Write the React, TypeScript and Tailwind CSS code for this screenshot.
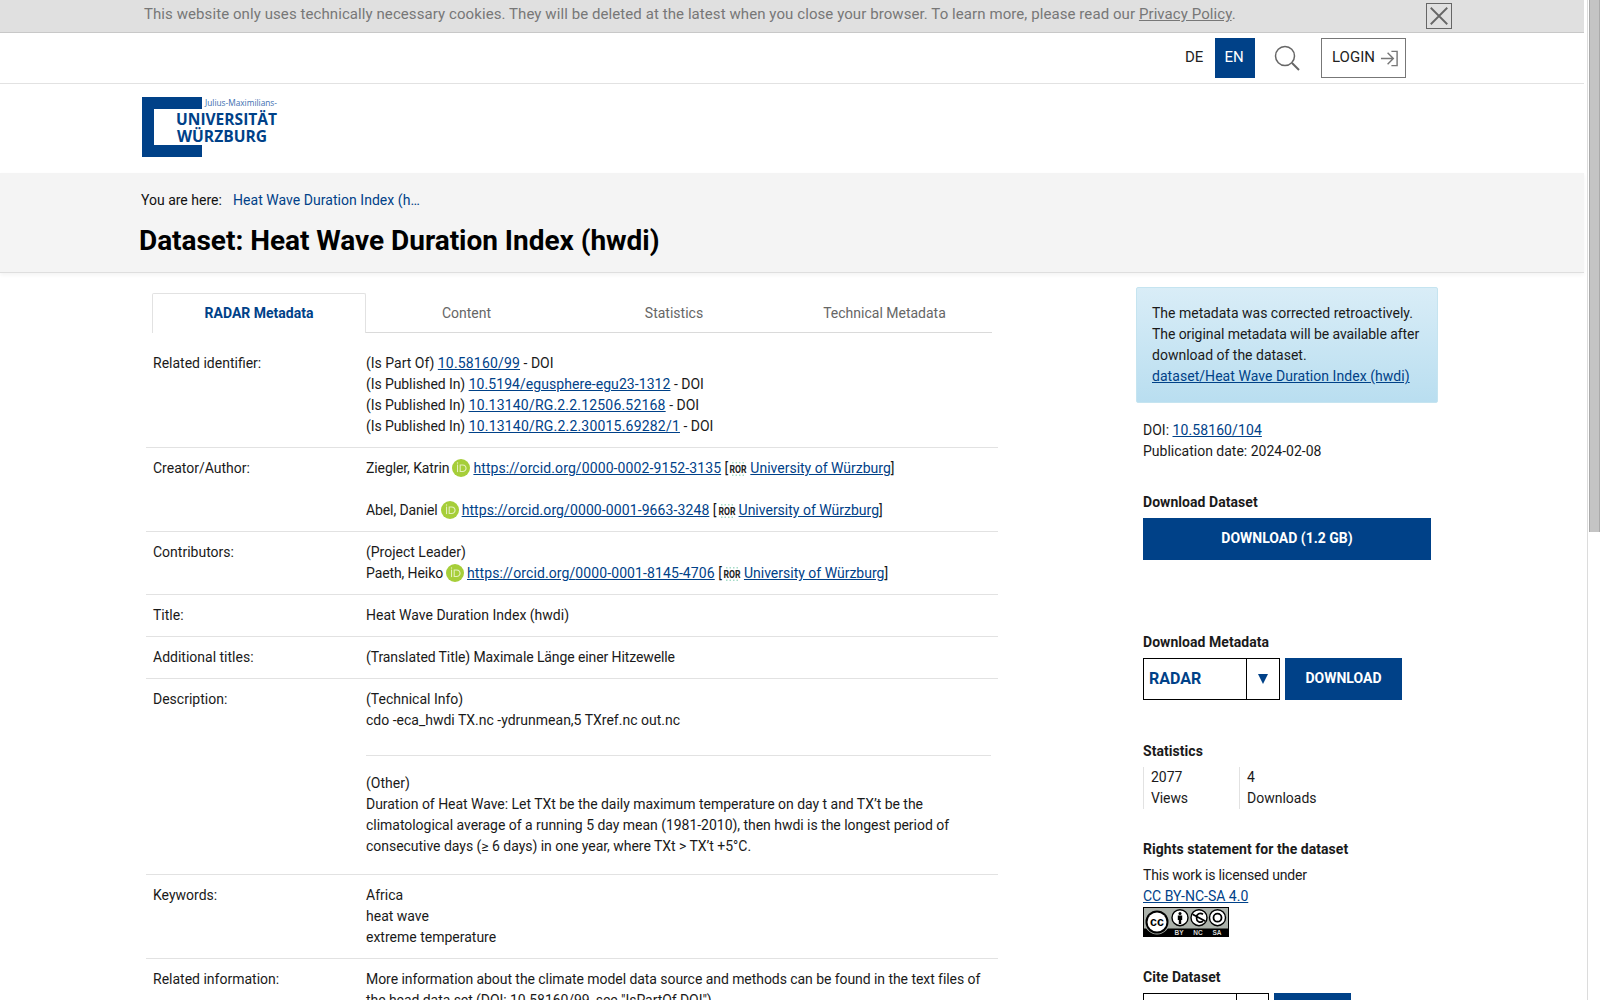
import { ReactNode } from "react"

const linkCls = "text-[#004188] underline"

function Orcid() {
  return (
    <svg viewBox="0 0 256 256" className="mx-[3px] inline-block h-[18px] w-[18px] align-[-4px]">
      <circle cx="128" cy="128" r="128" fill="#a6ce39" />
      <g fill="#e4f0bd">
        <path d="M86.3 186.2H70.9V79.1h15.4v107.1z" />
        <path d="M108.9 79.1h41.6c39.6 0 57 28.3 57 53.6 0 27.5-21.5 53.6-56.8 53.6h-41.8V79.1zm15.4 93.3h24.5c34.9 0 42.9-26.5 42.9-39.7C191.7 111.2 178 93 148 93h-23.7v79.4z" />
        <path d="M88.7 56.8c0 5.5-4.5 10.1-10.1 10.1s-10.1-4.6-10.1-10.1c0-5.6 4.5-10.1 10.1-10.1s10.1 4.6 10.1 10.1z" />
      </g>
    </svg>
  )
}

function Ror() {
  return (
    <svg viewBox="0 0 20 14" className="mr-[2px] inline-block h-[14px] w-[20px] align-[-3px]">
      <g fill="#a5dcc8">
        <rect x="4" y="0" width="1.5" height="1.5" />
        <rect x="7.500" y="0" width="1.5" height="1.5" />
        <rect x="11" y="0" width="1.5" height="1.5" />
        <rect x="14.500" y="0" width="1.5" height="1.5" />
        <rect x="4" y="12.500" width="1.5" height="1.5" />
        <rect x="7.500" y="12.500" width="1.5" height="1.5" />
        <rect x="11" y="12.500" width="1.5" height="1.5" />
        <rect x="14.500" y="12.500" width="1.5" height="1.5" />
      </g>
      <text x="10" y="10.5" textAnchor="middle" fontFamily="Roboto, sans-serif" fontWeight="700" fontSize="10" fill="#222" textLength="17" lengthAdjust="spacingAndGlyphs">
        ROR
      </text>
    </svg>
  )
}

function Person({ name, id }: { name: string; id: string }) {
  return (
    <>
      <span className="tracking-[-0.1px]">{name}</span>
      <Orcid />
      <a className={`${linkCls} tracking-[0.1px]`}>https://orcid.org/{id}</a> [<Ror />
      <a className={linkCls}>University of Würzburg</a>]
    </>
  )
}

function Row({ label, children, last }: { label: string; children: ReactNode; last?: boolean }) {
  return (
    <div className={`flex py-[10px] pr-[7px] pl-[7px] ${last ? "" : "border-b border-[#e2e2e2]"}`}>
      <div className="w-[213px] shrink-0">{label}</div>
      <div className="min-w-0 flex-1">{children}</div>
    </div>
  )
}

function Heading({ children }: { children: ReactNode }) {
  return <h3 className="font-bold tracking-[0.05px]">{children}</h3>
}

function BlueButton({ children, className }: { children: ReactNode; className: string }) {
  return (
    <button className={`flex items-center justify-center bg-[#004188] pb-[1px] font-bold text-white ${className}`}>{children}</button>
  )
}

function Logo() {
  return (
    <svg viewBox="0 0 140 62" className="h-[62px] w-[140px]">
      <path d="M0 0H60V12H12V48H60V60H0Z" fill="#004188" />
      <text x="63" y="9" fontFamily="'Open Sans', sans-serif" fontSize="9" fill="#3b6eb0" textLength="72" lengthAdjust="spacingAndGlyphs">
        Julius-Maximilians-
      </text>
      <text transform="translate(34 28) scale(1 1.2)" fontFamily="'Open Sans', sans-serif" fontWeight="700" fontSize="14" fill="#004188" textLength="101" lengthAdjust="spacingAndGlyphs">
        UNIVERSITÄT
      </text>
      <text transform="translate(35 45) scale(1 1.2)" fontFamily="'Open Sans', sans-serif" fontWeight="700" fontSize="14" fill="#004188" textLength="90" lengthAdjust="spacingAndGlyphs">
        WÜRZBURG
      </text>
    </svg>
  )
}

function CcBadge() {
  return (
    <svg viewBox="0 0 86 30" className="block h-[30px] w-[86px]">
      <rect width="86" height="30" fill="#000" />
      <rect x="1" y="1" width="84" height="20.5" fill="#abb1aa" />
      <circle cx="14" cy="15" r="12.500" fill="#abb1aa" />
      <circle cx="14" cy="15" r="11.500" fill="#000" />
      <circle cx="14" cy="15" r="9.500" fill="#fff" />
      <text x="14" y="19" textAnchor="middle" fontFamily="'Liberation Sans', sans-serif" fontWeight="700" fontSize="12.500" fill="#000">
        cc
      </text>
      <circle cx="37" cy="10.700" r="8" fill="#fff" stroke="#000" strokeWidth="1.4" />
      <circle cx="37" cy="6.500" r="1.5" fill="#000" />
      <path d="M34.800 8.500h4.400v4.600h-1v4h-2.400v-4h-1z" fill="#000" />
      <circle cx="56" cy="10.700" r="8" fill="#fff" stroke="#000" strokeWidth="1.4" />
      <path d="M49.500 7.200l13 7M60 7.200c-3-2-6.500-.5-6.500 3.500s3.500 5.500 6.500 3.500" fill="none" stroke="#000" strokeWidth="1.7" />
      <circle cx="74.500" cy="10.700" r="8" fill="#fff" stroke="#000" strokeWidth="1.4" />
      <circle cx="74.500" cy="10.700" r="4" fill="none" stroke="#000" strokeWidth="1.8" />
      <g fontFamily="'Liberation Sans', sans-serif" fontWeight="700" fontSize="6.500" fill="#d8d8d8" textAnchor="middle">
        <text x="36" y="28">BY</text>
        <text x="55" y="28">NC</text>
        <text x="74" y="28">SA</text>
      </g>
    </svg>
  )
}

function SelectBox({ value, width, split }: { value: string; width: string; split: string }) {
  return (
    <div className={`flex h-[42px] border border-black ${width}`}>
      <div className={`flex items-center pb-[1px] pl-[5px] text-[16px] font-bold text-[#004188] ${split}`}>{value}</div>
      <div className="flex flex-1 items-center justify-center border-l border-black">
        <svg viewBox="0 0 10 10" className="mt-[-1px] h-[10px] w-[10px]">
          <path d="M0 0H10L5 10Z" fill="#004188" />
        </svg>
      </div>
    </div>
  )
}

export default function App() {
  return (
    <div className="flex h-screen overflow-hidden bg-white text-[14px] leading-[21px] text-[#1a1a1a] [font-family:Roboto,sans-serif]">
      <main className="w-[1584px] shrink-0">
        {/* Cookie notice */}
        <div className="flex h-[33px] items-start border-b border-[#c8c8c8] bg-[#e0e0e0] pl-[144px] text-[15px] leading-[28px] tracking-[0.08px] text-[#777]">
          <p className="w-[1282px]">
            This website only uses technically necessary cookies. They will be deleted at the latest when you close your browser. To learn more, please read our{" "}
            <a className="underline">Privacy Policy</a>.
          </p>
          <button className="mt-[3px] flex h-[26px] w-[26px] items-center justify-center border border-[#666]">
            <svg viewBox="0 0 24 24" className="h-[22px] w-[22px]">
              <path d="M3 3L21 21M21 3L3 21" stroke="#666" strokeWidth="2" />
            </svg>
          </button>
        </div>

        {/* Language, search, login */}
        <div className="flex h-[51px] items-start border-b border-[#e2e2e2] pt-[5px] pl-[1183px]">
          <div className="flex h-[40px] w-[32px] items-center text-[15px] text-[#222]">
            <span className="pb-[2px] pl-[2px]">DE</span>
          </div>
          <div className="flex h-[40px] w-[40px] items-center justify-center bg-[#004188] pr-[2px] pb-[2px] text-[15px] text-white">EN</div>
          <svg viewBox="0 0 26 26" className="mt-[7px] ml-[19px] h-[26px] w-[26px]" fill="none" stroke="#666">
            <circle cx="11" cy="11" r="9.500" strokeWidth="1.500" />
            <path d="M18 18L25 25" strokeWidth="2" />
          </svg>
          <div className="ml-[21px] flex h-[40px] w-[85px] items-center border border-[#777] pl-[10px] text-[15px] text-[#222]">
            <span className="pb-[2px]">LOGIN</span>
            <svg viewBox="0 0 20 20" className="mt-[1px] ml-[5px] h-[19px] w-[19px]" fill="none" stroke="#777" strokeWidth="1.500">
              <path d="M1 10H13M8 4L14 10L8 16M12 2.500H18V17.500H12" />
            </svg>
          </div>
        </div>

        {/* Logo */}
        <div className="h-[89px] pt-[13px] pl-[142px]">
          <Logo />
        </div>

        {/* Breadcrumb and title */}
        <div className="h-[100px] border-b border-[#dedede] bg-[#f4f4f4] pt-[17px] shadow-[0_2px_4px_rgba(0,0,0,0.05)]">
          <div className="flex pl-[141px]">
            <span className="w-[92px] text-[#111]">You are here:</span>
            <a className="tracking-[0.04px] text-[#004188]">Heat Wave Duration Index (h…</a>
          </div>
          <h1 className="mt-[10px] pl-[139px] text-[28px] leading-[40px] font-bold tracking-[-0.03px] text-black">Dataset: Heat Wave Duration Index (hwdi)</h1>
        </div>

        <div className="flex pt-[14px]">
          {/* Metadata */}
          <section className="ml-[146px] w-[852px] shrink-0">
            <div className="ml-[6px] flex h-[46px] w-[840px] items-end">
              <div className="flex h-[40px] w-[214px] items-center justify-center rounded-t-[2px] border-x border-t border-[#e2e2e2] font-bold text-[#004188]">
                RADAR Metadata
              </div>
              <div className="flex h-[40px] w-[201px] items-center justify-center border-b border-[#dadada] pt-[1px] text-[#666]">Content</div>
              <div className="flex h-[40px] w-[212px] items-center justify-center border-b border-[#dadada] pt-[1px] pl-[2px] text-[#666]">Statistics</div>
              <div className="flex h-[40px] w-[213px] items-center justify-center border-b border-[#dadada] pt-[1px] pr-[2px] text-[#666]">Technical Metadata</div>
            </div>
            <div className="mt-[10px]">
              <Row label="Related identifier:">
                <p>
                  (Is Part Of) <a className={`${linkCls} tracking-[0.18px]`}>10.58160/99</a> - DOI
                </p>
                <p>
                  <span className="tracking-[-0.09px]">(Is Published In)</span> <a className={`${linkCls} tracking-[0.07px]`}>10.5194/egusphere-egu23-1312</a> - DOI
                </p>
                <p>
                  <span className="tracking-[-0.09px]">(Is Published In)</span> <a className={`${linkCls} tracking-[0.19px]`}>10.13140/RG.2.2.12506.52168</a> - DOI
                </p>
                <p>
                  <span className="tracking-[-0.09px]">(Is Published In)</span> <a className={`${linkCls} tracking-[0.2px]`}>10.13140/RG.2.2.30015.69282/1</a> - DOI
                </p>
              </Row>
              <Row label="Creator/Author:">
                <p className="h-[42px]">
                  <Person name="Ziegler, Katrin" id="0000-0002-9152-3135" />
                </p>
                <p>
                  <Person name="Abel, Daniel" id="0000-0001-9663-3248" />
                </p>
              </Row>
              <Row label="Contributors:">
                <p>(Project Leader)</p>
                <p>
                  <Person name="Paeth, Heiko" id="0000-0001-8145-4706" />
                </p>
              </Row>
              <Row label="Title:">Heat Wave Duration Index (hwdi)</Row>
              <Row label="Additional titles:">
                <span className="tracking-[-0.1px]">(Translated Title) Maximale Länge einer Hitzewelle</span>
              </Row>
              <Row label="Description:">
                <p>(Technical Info)</p>
                <p>cdo -eca_hwdi TX.nc -ydrunmean,5 TXref.nc out.nc</p>
                <hr className="mt-[24px] mb-[17px] border-[#e2e2e2]" />
                <p>(Other)</p>
                <p className="mb-[7px] tracking-[-0.03px]">
                  Duration of Heat Wave: Let TXt be the daily maximum temperature on day t and TX’t be the
                  <br />
                  climatological average of a running 5 day mean (1981-2010), then hwdi is the longest period of
                  <br />
                  consecutive days (≥ 6 days) in one year, where TXt &gt; TX’t +5°C.
                </p>
              </Row>
              <Row label="Keywords:">
                <p>Africa</p>
                <p>heat wave</p>
                <p>extreme temperature</p>
              </Row>
              <Row label="Related information:" last>
                <p className="tracking-[-0.06px]">
                  More information about the climate model data source and methods can be found in the text files of
                  <br />
                  the head data set (DOI: 10.58160/99, see "IsPartOf DOI").
                </p>
              </Row>
            </div>
          </section>

          {/* Sidebar */}
          <aside className="ml-[138px] w-[302px] shrink-0">
            <div className="h-[116px] rounded-[2px] border border-[#c5e4f0] bg-gradient-to-b from-[#d9edf7] to-[#b9def0] pt-[15px] pl-[15px] text-[14px]">
              <p>The metadata was corrected retroactively.</p>
              <p className="tracking-[-0.07px]">The original metadata will be available after</p>
              <p>download of the dataset.</p>
              <a className={`${linkCls} tracking-[0.05px]`}>dataset/Heat Wave Duration Index (hwdi)</a>
            </div>
            <div className="pl-[7px]">
              <div className="mt-[17px]">
                <p>
                  DOI: <a className={`${linkCls} tracking-[0.1px]`}>10.58160/104</a>
                </p>
                <p>Publication date: 2024-02-08</p>
              </div>
              <div className="mt-[30px]">
                <Heading>Download Dataset</Heading>
                <BlueButton className="mt-[5px] h-[42px] w-[288px]">DOWNLOAD (1.2 GB)</BlueButton>
              </div>
              <div className="mt-[72px]">
                <Heading>Download Metadata</Heading>
                <div className="mt-[5px] flex gap-[5px]">
                  <SelectBox value="RADAR" width="w-[137px]" split="w-[102px]" />
                  <BlueButton className="h-[42px] w-[117px]">DOWNLOAD</BlueButton>
                </div>
              </div>
              <div className="mt-[41px]">
                <Heading>Statistics</Heading>
                <div className="mt-[5px] flex">
                  <div className="w-[96px] border-l border-[#e2e2e2] pl-[7px]">
                    <p>2077</p>
                    <p className="tracking-[-0.1px]">Views</p>
                  </div>
                  <div className="border-l border-[#e2e2e2] pl-[7px]">
                    <p>4</p>
                    <p>Downloads</p>
                  </div>
                </div>
              </div>
              <div className="mt-[30px]">
                <Heading>Rights statement for the dataset</Heading>
                <p className="mt-[5px] tracking-[-0.19px]">This work is licensed under</p>
                <a className={linkCls}>CC BY-NC-SA 4.0</a>
                <CcBadge />
              </div>
              <div className="mt-[30px]">
                <Heading>Cite Dataset</Heading>
                <div className="mt-[5px] flex gap-[5px]">
                  <SelectBox value="" width="w-[126px]" split="w-[92px]" />
                  <BlueButton className="h-[42px] w-[77px]">{""}</BlueButton>
                </div>
              </div>
            </div>
          </aside>
        </div>
      </main>

      {/* Scrollbar */}
      <div className="ml-[3px] w-[13px] shrink-0 border-l border-[#dcdcdc] pl-[1px]">
        <div className="h-[532px] border-x border-[#aaa] bg-[#c4c4c4]" />
      </div>
    </div>
  )
}
